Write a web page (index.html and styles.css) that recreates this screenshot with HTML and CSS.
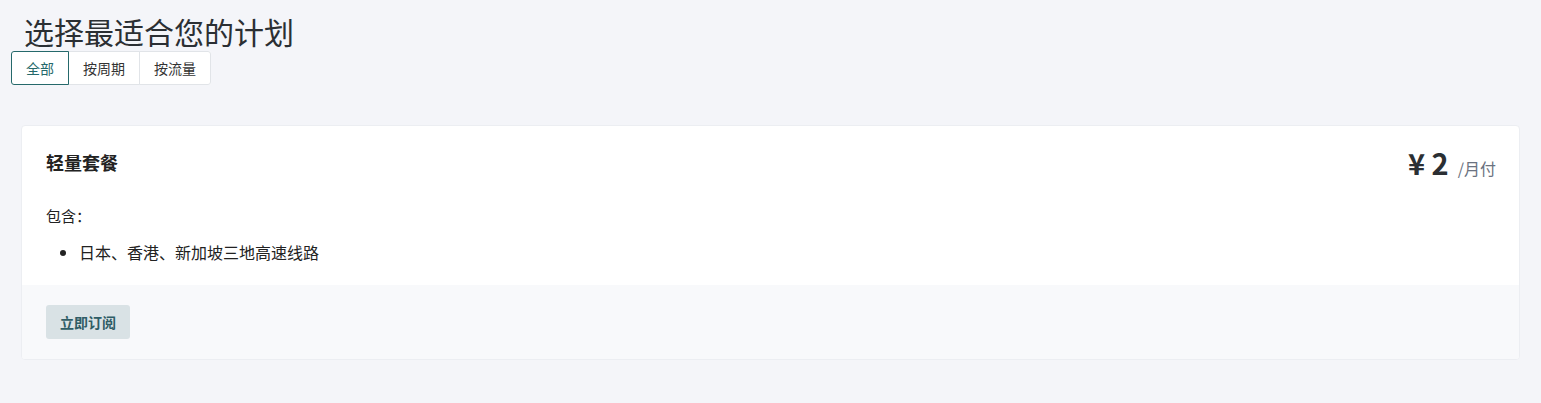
FILE: index.html
```html
<!DOCTYPE html>
<html lang="zh-CN">
<head>
<meta charset="utf-8">
<link rel="stylesheet" href="styles.css">
</head>
<body>
<div class="page">
  <h1 class="title">选择最适合您的计划</h1>
  <div class="tabs">
    <button class="tab active">全部</button>
    <button class="tab">按周期</button>
    <button class="tab">按流量</button>
  </div>
  <div class="card">
    <div class="card-body">
      <div class="card-head">
        <div class="plan-name">轻量套餐</div>
        <div class="price"><span class="amount">¥ 2</span><span class="period">/月付</span></div>
      </div>
      <div class="includes">包含：</div>
      <ul class="features">
        <li>日本、香港、新加坡三地高速线路</li>
      </ul>
    </div>
    <div class="card-foot">
      <button class="subscribe">立即订阅</button>
    </div>
  </div>
</div>
</body>
</html>
```

FILE: styles.css
```css
* { box-sizing: border-box; }
html, body {
  margin: 0;
  background: #f4f5f9;
  font-family: "Noto Sans CJK SC", "Noto Sans", sans-serif;
  color: #333;
}
.page {
  padding: 13px 21px 0 11px;
}
.title {
  margin: 0 0 2px 13px;
  font-size: 30px;
  line-height: 36px;
  font-weight: 400;
  color: #2b2f33;
}
.tabs {
  display: flex;
  width: max-content;
  background: #fff;
  border-radius: 3px;
}
.tab {
  font-family: inherit;
  font-size: 14px;
  line-height: 20px;
  padding: 6px 14px;
  background: #fff;
  color: #333;
  border: 1px solid #e1e4e8;
  margin-left: -1px;
  cursor: pointer;
}
.tab:first-child { margin-left: 0; border-radius: 3px 0 0 3px; }
.tab:last-child { border-radius: 0 3px 3px 0; }
.tab.active {
  border-color: #25696b;
  color: #25696b;
  position: relative;
  z-index: 1;
}
.card {
  margin: 40px 0 0 10px;
  background: #fff;
  border: 1px solid #eceef2;
  border-radius: 4px;
  overflow: hidden;
}
.card-body {
  padding: 24px 23px 21px 24px;
}
.card-head {
  display: flex;
  justify-content: space-between;
  align-items: center;
  height: 28px;
}
.plan-name {
  font-size: 18px;
  line-height: 26px;
  font-weight: 700;
  color: #222;
  margin-bottom: 4px;
}
.price {
  display: flex;
  align-items: baseline;
}
.amount {
  font-size: 29px;
  font-weight: 700;
  line-height: 28px;
  color: #2b2f33;
}
.period {
  margin-left: 9px;
  font-size: 16px;
  color: #6b7280;
}
.includes {
  margin-top: 28px;
  font-size: 15px;
  line-height: 20px;
  color: #222;
}
.features {
  margin: 14px 0 0 0;
  padding-left: 33px;
  font-size: 16px;
  line-height: 24px;
  color: #222;
}
.card-foot {
  background: #f8f9fb;
  padding: 20px 24px 20px 24px;
}
.subscribe {
  font-family: inherit;
  font-size: 14px;
  font-weight: 700;
  line-height: 20px;
  padding: 7px 14px;
  border: 0;
  border-radius: 3px;
  background: #d9e2e5;
  color: #2f5d66;
}
```
